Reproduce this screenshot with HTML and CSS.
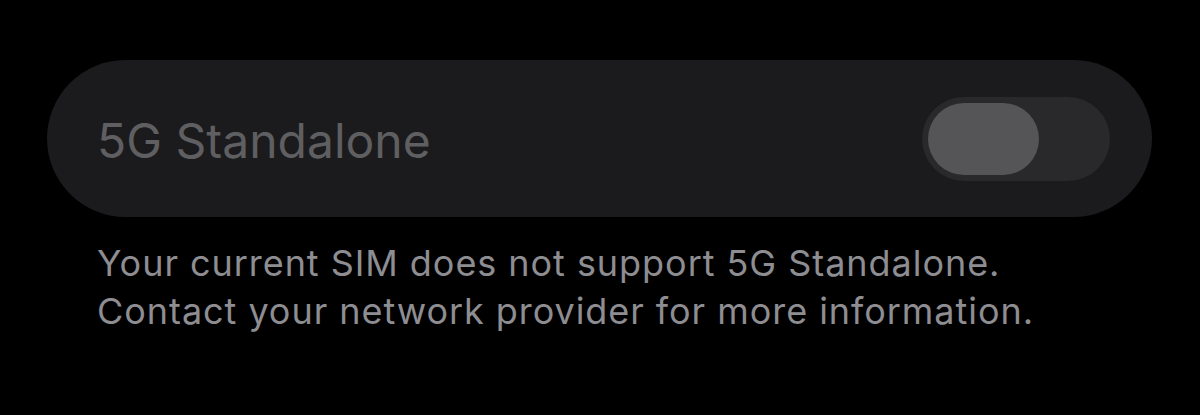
FILE: index.html
```html
<!DOCTYPE html>
<html>
<head>
<meta charset="utf-8">
<link rel="stylesheet" href="styles.css">
</head>
<body>
<main class="page">
  <section class="card">
    <span class="label">5G Standalone</span>
    <div class="toggle" role="switch" aria-checked="false" aria-disabled="true">
      <div class="knob"></div>
    </div>
  </section>
  <p class="footer">Your current SIM does not support 5G Standalone.<br>Contact your network provider for more information.</p>
</main>
</body>
</html>
```

FILE: styles.css
```css
html, body {
  margin: 0;
  padding: 0;
  background: #000;
}
body {
  width: 1200px;
  height: 415px;
  overflow: hidden;
  font-family: Inter, "Noto Sans", sans-serif;
}
.page {
  padding: 60px 48px 0 47px;
}
.card {
  height: 157px;
  border-radius: 79px;
  background: #1b1b1d;
  display: flex;
  align-items: center;
  justify-content: space-between;
  padding: 0 42px 0 50px;
}
.label {
  font-size: 48px;
  color: #5f5f62;
  letter-spacing: 0;
  padding-top: 3px;
}
.toggle {
  width: 188px;
  height: 84px;
  border-radius: 42px;
  background: #29292b;
  display: flex;
  align-items: center;
  padding-left: 6px;
  box-sizing: border-box;
}
.knob {
  width: 111px;
  height: 72px;
  border-radius: 36px;
  background: #555557;
}
.footer {
  margin: 22px 0 0 50px;
  font-size: 36px;
  line-height: 48px;
  color: #8d8d92;
  letter-spacing: 0.95px;
}
```
